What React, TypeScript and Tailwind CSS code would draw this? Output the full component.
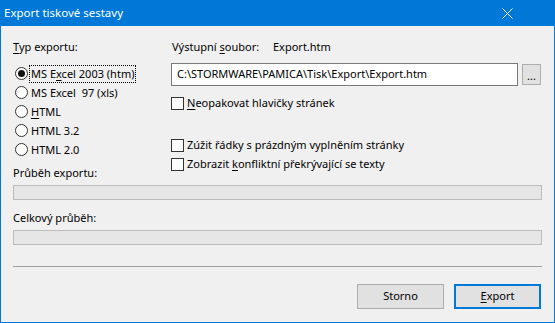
import React from "react";

const font = { fontFamily: '"Noto Sans", "Segoe UI", sans-serif' };

const Radio = ({ checked, children }: { checked?: boolean; children: React.ReactNode }) => (
  <div className="flex h-[19px] items-center">
    <span className="ml-[2px] flex h-[13px] w-[13px] items-center justify-center rounded-full border border-[#333] bg-white">
      {checked && <span className="h-[7px] w-[7px] rounded-full bg-[#111]" />}
    </span>
    <span
      className={
        "ml-[2px] px-[1px] leading-[16px] " +
        (checked ? "outline outline-1 outline-dotted outline-black" : "")
      }
    >
      {children}
    </span>
  </div>
);

const Check = ({ children }: { children: React.ReactNode }) => (
  <div className="flex h-[16px] items-center">
    <span className="h-[13px] w-[13px] border border-[#333] bg-white" />
    <span className="ml-[3px] leading-[16px]">{children}</span>
  </div>
);

const u = (c: string) => <span className="underline underline-offset-2">{c}</span>;

export default function App() {
  return (
    <div className="h-[323px] w-[555px] overflow-hidden bg-[#0078d7] text-[11px] text-black" style={font}>
      <div className="flex h-[26px] items-center justify-between pl-[4px] pr-[42px] text-[11.5px] text-white">
        <span className="leading-[16px]">Export tiskové sestavy</span>
        <svg width="11" height="11" viewBox="0 0 11 11">
          <path d="M0.5 0.5 L10.5 10.5 M10.5 0.5 L0.5 10.5" stroke="white" strokeWidth="1" />
        </svg>
      </div>
      <div className="mx-[1px] h-[296px] bg-[#f0f0f0] px-[12px] pt-[13px]">
        <div className="flex">
          <div className="w-[158px]">
            <div className="leading-[16px]">{u("T")}yp exportu:</div>
            <div className="mt-[9px]">
              <Radio checked>MS E{u("x")}cel 2003 (htm)</Radio>
              <Radio>MS Excel&nbsp; 97 (xls)</Radio>
              <Radio>{u("H")}TML</Radio>
              <Radio>HTML 3.2</Radio>
              <Radio>HTML 2.0</Radio>
            </div>
            <div className="mt-[6px] leading-[16px]">Průběh exportu:</div>
          </div>
          <div className="flex-1">
            <div className="flex leading-[16px]">
              <span className="w-[102px] pl-[1px]">Výstupní {u("s")}oubor:</span>
              <span>Export.htm</span>
            </div>
            <div className="mt-[8px] flex items-center">
              <div className="flex h-[23px] w-[347px] items-center border border-[#7a7a7a] bg-white pl-[5px]">
                C:\STORMWARE\PAMICA\Tisk\Export\Export.htm
              </div>
              <div className="ml-[4px] flex h-[21px] w-[19px] items-end justify-center border border-[#adadad] bg-[#e1e1e1] pb-[3px] text-[11px] leading-[11px]">
                ...
              </div>
            </div>
            <div className="mt-[9px]">
              <Check>{u("N")}eopakovat hlavičky stránek</Check>
            </div>
            <div className="mt-[26px]">
              <Check>Zúžit řádky s prázdným vyplněním stránky</Check>
            </div>
            <div className="mt-[3px]">
              <Check>Zobrazit {u("k")}onfliktní překrývající se texty</Check>
            </div>
          </div>
        </div>
        <div className="mt-[4px] h-[15px] border border-[#bcbcbc] bg-[#e6e6e6]" />
        <div className="mt-[10px] leading-[16px]">Celkový průběh:</div>
        <div className="mt-[4px] h-[15px] border border-[#bcbcbc] bg-[#e6e6e6]" />
        <div className="mt-[21px] h-[1px] bg-[#a0a0a0]" />
        <div className="mt-[17px] flex justify-end gap-[10px] pr-[1px]">
          <button className="flex h-[25px] w-[87px] items-center justify-center border border-[#adadad] bg-[#e1e1e1]">
            Storno
          </button>
          <button className="flex h-[25px] w-[87px] items-center justify-center border-2 border-[#0078d7] bg-[#e1e1e1]">
            {u("E")}xport
          </button>
        </div>
      </div>
    </div>
  );
}
